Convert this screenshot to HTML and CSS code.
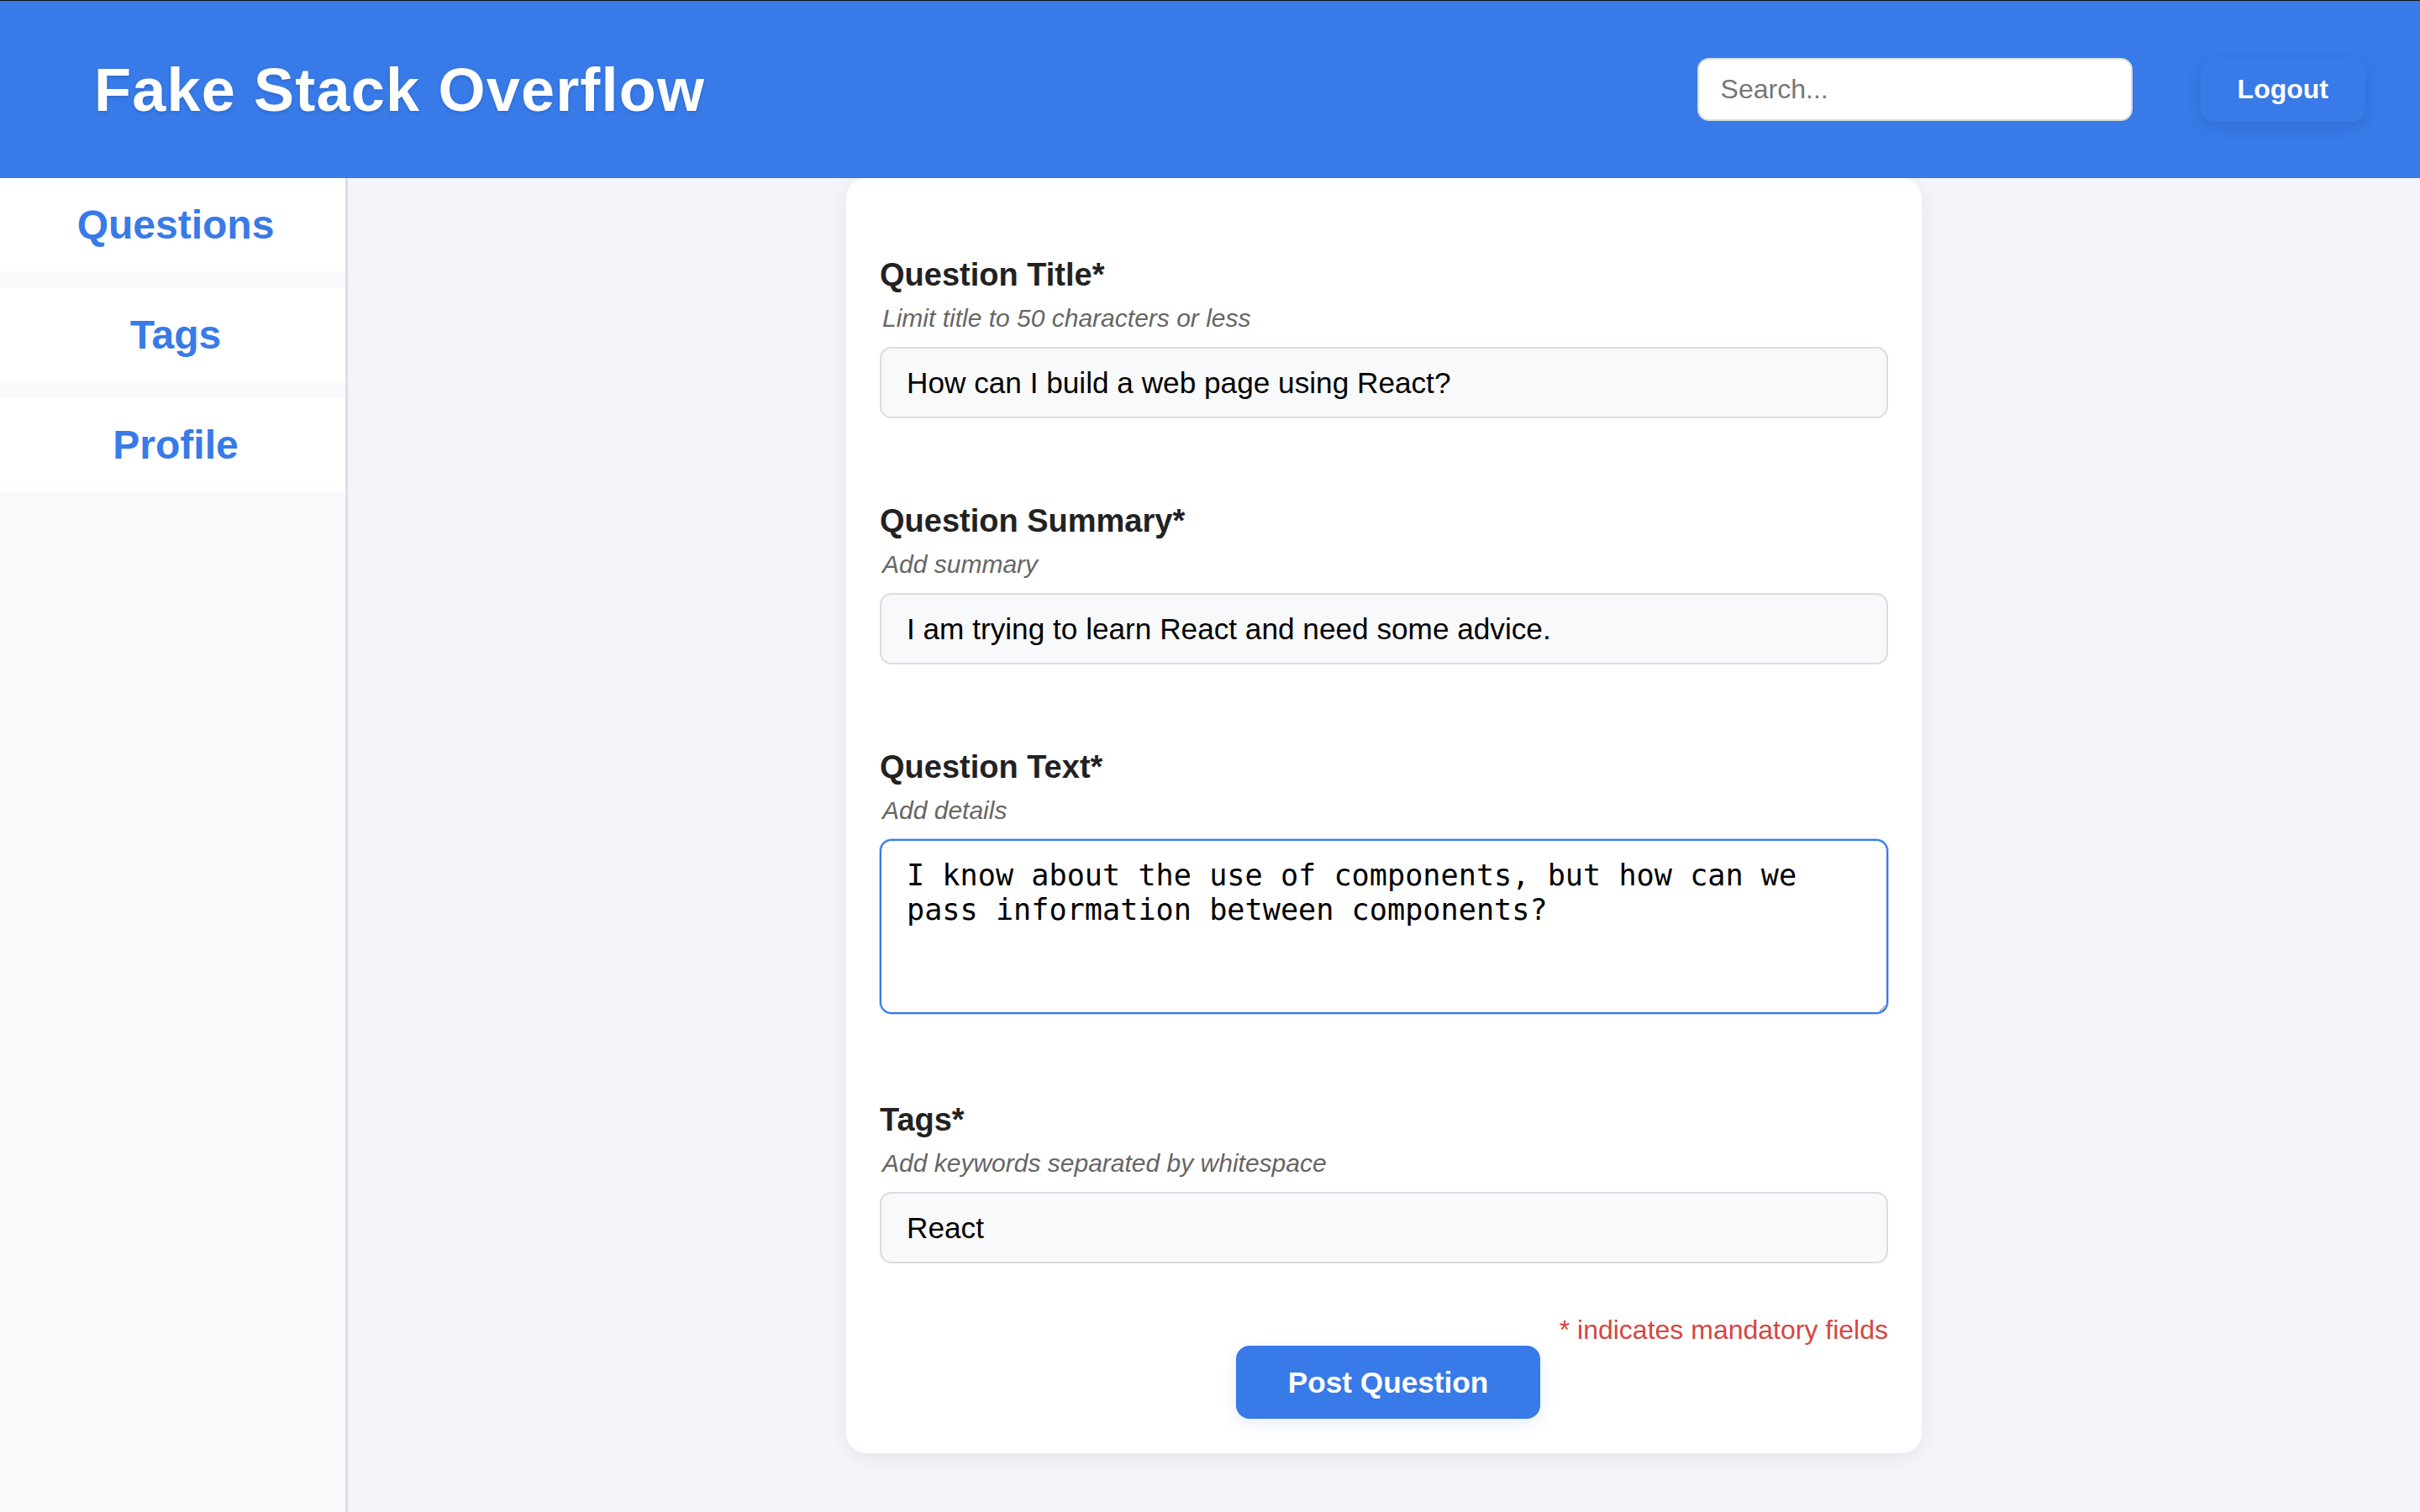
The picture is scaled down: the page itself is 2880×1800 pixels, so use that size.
FILE: index.html
```html
<!DOCTYPE html>
<html lang="en">
<head>
<meta charset="utf-8">
<title>Fake Stack Overflow</title>
<link rel="stylesheet" href="styles.css">
</head>
<body>
<header class="topbar">
  <div class="brand">Fake Stack Overflow</div>
  <div class="topbar-actions">
    <input class="search" type="text" placeholder="Search...">
    <button class="logout" type="button">Logout</button>
  </div>
</header>
<div class="layout">
  <nav class="sidebar">
    <a class="nav-item" href="#">Questions</a>
    <a class="nav-item" href="#">Tags</a>
    <a class="nav-item" href="#">Profile</a>
  </nav>
  <main class="main">
    <form class="card">
      <div class="field">
        <label class="field-label">Question Title*</label>
        <div class="field-hint">Limit title to 50 characters or less</div>
        <input class="field-input" type="text" value="How can I build a web page using React?">
      </div>
      <div class="field">
        <label class="field-label">Question Summary*</label>
        <div class="field-hint">Add summary</div>
        <input class="field-input" type="text" value="I am trying to learn React and need some advice.">
      </div>
      <div class="field field-text">
        <label class="field-label">Question Text*</label>
        <div class="field-hint">Add details</div>
        <textarea class="field-area is-focused">I know about the use of components, but how can we pass information between components?</textarea>
      </div>
      <div class="field">
        <label class="field-label">Tags*</label>
        <div class="field-hint">Add keywords separated by whitespace</div>
        <input class="field-input" type="text" value="React">
      </div>
      <div class="mandatory">* indicates mandatory fields</div>
      <div class="submit-row">
        <button class="submit" type="button">Post Question</button>
      </div>
    </form>
  </main>
</div>
</body>
</html>
```
FILE: styles.css
```css
html, body {
  margin: 0;
  padding: 0;
}

body {
  font-family: "Liberation Sans", Arial, sans-serif;
  background: #f4f5fa;
  color: #222;
  min-height: 1800px;
}

.topbar {
  box-sizing: border-box;
  height: 212px;
  border-top: 1px solid #111;
  background: #377ae8;
  display: flex;
  align-items: center;
  justify-content: space-between;
  padding: 0 65px 0 112px;
}

.brand {
  color: #fff;
  font-size: 72px;
  font-weight: bold;
  letter-spacing: 1.2px;
  text-shadow: 0 2px 4px rgba(0, 0, 0, 0.12);
}

.topbar-actions {
  display: flex;
  align-items: center;
  gap: 81px;
}

.search {
  box-sizing: border-box;
  width: 518px;
  height: 75px;
  padding: 0 26px;
  border: 2px solid #dcdcdc;
  border-radius: 14px;
  background: #fff;
  font-family: "Liberation Sans", Arial, sans-serif;
  font-size: 32px;
  color: #222;
  outline: none;
}

.search::placeholder {
  color: #767676;
}

.logout {
  box-sizing: border-box;
  height: 77px;
  padding: 0 44px;
  border: none;
  border-radius: 16px;
  background: #377ae8;
  color: #fff;
  font-family: "Liberation Sans", Arial, sans-serif;
  font-size: 32px;
  font-weight: bold;
  box-shadow: 0 6px 18px rgba(0, 0, 0, 0.1);
}

.layout {
  display: flex;
  min-height: 1588px;
}

.sidebar {
  width: 411px;
  flex: none;
  background: #f8f9fb;
  border-right: 3px solid #dedfe3;
  display: flex;
  flex-direction: column;
  gap: 20px;
}

.nav-item {
  display: block;
  padding: 28px 0 28px 7px;
  background: #fff;
  color: #377ae8;
  text-align: center;
  text-decoration: none;
  font-size: 48px;
  line-height: 55px;
  font-weight: bold;
}

.main {
  flex: 1;
  display: flex;
  justify-content: center;
  align-items: flex-start;
}

.card {
  box-sizing: border-box;
  width: 1280px;
  padding: 40px 40px 41px;
  background: #fff;
  border-radius: 24px;
  box-shadow: 0 6px 24px rgba(30, 40, 80, 0.07);
}

.field {
  padding-top: 53px;
  margin-bottom: 47px;
}

.field-label {
  display: block;
  margin-bottom: 13px;
  font-size: 38px;
  line-height: 44px;
  font-weight: bold;
  color: #222;
}

.field-hint {
  margin-bottom: 17px;
  font-size: 30px;
  line-height: 34px;
  font-style: italic;
  color: #666;
  padding-left: 3px;
}

.field-input {
  display: block;
  box-sizing: border-box;
  width: 100%;
  height: 85px;
  padding: 0 30px;
  border: 2px solid #dddddd;
  border-radius: 14px;
  background: #f8f9fa;
  font-family: "Liberation Sans", Arial, sans-serif;
  font-size: 35.2px;
  color: #000;
  outline: none;
}

.field-area {
  display: block;
  box-sizing: border-box;
  width: 100%;
  height: 208px;
  padding: 20px 30px;
  border: 2px solid #dddddd;
  border-radius: 14px;
  background: #fff;
  font-family: "DejaVu Sans Mono", Menlo, monospace;
  font-size: 35.2px;
  line-height: 41px;
  color: #000;
  outline: none;
  resize: vertical;
}

.field-area.is-focused {
  border-color: #377ae8;
  box-shadow: 0 0 0 1px rgba(55, 122, 232, 0.35);
}

.field-text {
  margin-bottom: 51px;
}

.mandatory {
  margin-top: 61px;
  text-align: right;
  font-size: 32px;
  line-height: 36px;
  color: #d64541;
}

.submit-row {
  display: flex;
  justify-content: center;
  margin-top: 1px;
}

.submit {
  margin-left: 10px;
  padding: 23px 62px;
  border: none;
  border-radius: 16px;
  background: #377ae8;
  color: #fff;
  font-family: "Liberation Sans", Arial, sans-serif;
  font-size: 35.2px;
  line-height: 41px;
  font-weight: bold;
  box-shadow: 0 6px 18px rgba(55, 122, 232, 0.12);
}
```
